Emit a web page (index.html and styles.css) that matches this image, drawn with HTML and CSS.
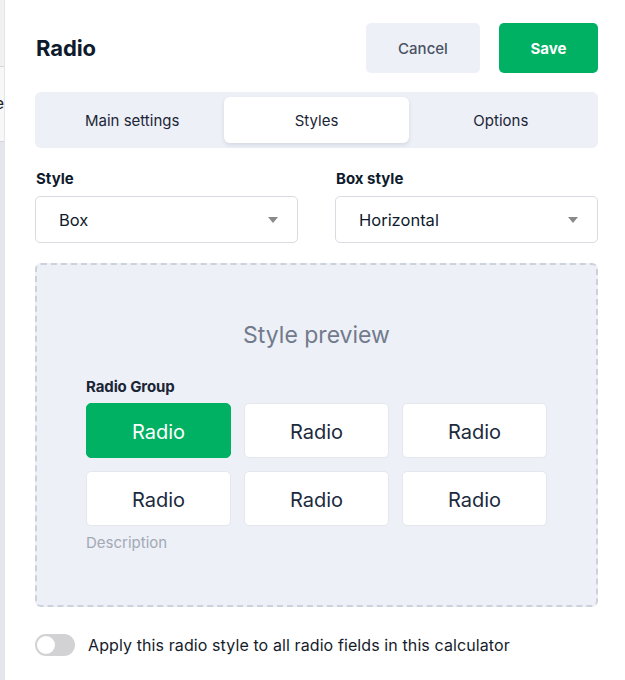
FILE: index.html
```html
<!DOCTYPE html>
<html>
<head>
<meta charset="utf-8">
<link rel="stylesheet" href="styles.css">
</head>
<body>
<div class="page">
  <div class="edge">
    <div class="edge-top"></div>
    <div class="edge-mid"><span>e</span></div>
    <div class="edge-bot"></div>
  </div>
  <div class="panel">
    <div class="header">
      <h1 class="title">Radio</h1>
      <div class="actions">
        <button class="btn btn-cancel">Cancel</button>
        <button class="btn btn-save">Save</button>
      </div>
    </div>
    <div class="tabs">
      <div class="tab">Main settings</div>
      <div class="tab active">Styles</div>
      <div class="tab">Options</div>
    </div>
    <div class="fields">
      <div class="field">
        <div class="label">Style</div>
        <div class="select"><span>Box</span><span class="caret"></span></div>
      </div>
      <div class="field">
        <div class="label">Box style</div>
        <div class="select"><span>Horizontal</span><span class="caret"></span></div>
      </div>
    </div>
    <div class="preview">
      <div class="preview-title">Style preview</div>
      <div class="group-label">Radio Group</div>
      <div class="radios">
        <div class="radio selected">Radio</div>
        <div class="radio">Radio</div>
        <div class="radio">Radio</div>
        <div class="radio">Radio</div>
        <div class="radio">Radio</div>
        <div class="radio">Radio</div>
      </div>
      <div class="desc">Description</div>
    </div>
    <div class="apply">
      <span class="toggle"><span class="knob"></span></span>
      <span class="apply-text">Apply this radio style to all radio fields in this calculator</span>
    </div>
  </div>
</div>
</body>
</html>
```

FILE: styles.css
```css
* { box-sizing: border-box; }
html, body { margin: 0; padding: 0; background: #fff; }
body {
  font-family: Inter, "Noto Sans", "Liberation Sans", sans-serif;
  color: #1b2536;
  width: 625px;
  height: 680px;
  overflow: hidden;
}
.page { display: flex; height: 680px; }
.edge {
  width: 5px;
  flex: none;
  display: flex;
  flex-direction: column;
  border-right: 1px solid #e3e5ea;
  overflow: hidden;
}
.edge-top { height: 67px; background: #f1f1f2; border-bottom: 1px solid #d6d7da; }
.edge-mid {
  height: 75px;
  background: #f7f7f8;
  border-bottom: 1px solid #d6d7da;
  position: relative;
}
.edge-mid span {
  position: absolute;
  right: 0;
  top: 26px;
  font-size: 16px;
  color: #222;
  line-height: 20px;
}
.edge-bot { flex: 1; background: #e4e6ec; }

.panel { flex: 1; padding: 23px 27px 0 30px; }

.header { display: flex; align-items: center; justify-content: space-between; height: 50px; }
.title { margin: 0; font-size: 22px; font-weight: 700; color: #0f1b2d; letter-spacing: -0.1px; padding-left: 1px; }
.actions { display: flex; gap: 19px; }
.btn {
  height: 50px;
  border: none;
  border-radius: 5px;
  font-family: inherit;
  font-size: 15px;
  padding-top: 2px;
}
.btn-cancel { width: 114px; background: #edf0f7; color: #4a5263; font-weight: 500; }
.btn-save { width: 99px; background: #00b063; color: #fff; font-weight: 700; }

.tabs {
  margin-top: 19px;
  height: 56px;
  background: #edf0f7;
  border-radius: 6px;
  padding: 5px;
  display: grid;
  grid-template-columns: repeat(3, 1fr);
}
.tab {
  display: flex;
  align-items: center;
  justify-content: center;
  font-size: 15px;
  color: #1b2536;
  border-radius: 6px;
}
.tab.active { background: #fff; box-shadow: 0 2px 4px rgba(30, 40, 70, 0.12); }

.fields { margin-top: 21px; display: grid; grid-template-columns: 263px 263px; column-gap: 37px; }
.label { font-size: 15px; font-weight: 700; line-height: 20px; color: #0f1b2d; padding-left: 1px; }
.select {
  margin-top: 7px;
  height: 47px;
  border: 1px solid #d9dbe0;
  border-radius: 5px;
  display: flex;
  align-items: center;
  justify-content: space-between;
  padding: 0 19px 0 23px;
  font-size: 16.5px;
  color: #0f1b2d;
}
.caret {
  width: 0; height: 0;
  border-left: 5px solid transparent;
  border-right: 5px solid transparent;
  border-top: 6px solid #8a8a8d;
}

.preview {
  margin-top: 20px;
  height: 344px;
  background: #edf0f7;
  border: 2px dashed #cdd1db;
  border-radius: 6px;
  padding: 55px 49px 0 49px;
}
.preview-title { text-align: center; font-size: 23px; line-height: 30px; color: #717b8c; }
.group-label { margin-top: 28px; font-size: 15px; font-weight: 700; line-height: 18px; color: #1b2536; letter-spacing: -0.1px; }
.radios {
  margin-top: 7px;
  display: grid;
  grid-template-columns: repeat(3, 145px);
  column-gap: 13px;
  row-gap: 13px;
}
.radio {
  height: 55px;
  background: #fff;
  border: 1px solid #e4e7ec;
  border-radius: 5px;
  display: flex;
  align-items: center;
  justify-content: center;
  font-size: 20px;
  color: #1b2a3d;
  padding-top: 3px;
}
.radio.selected { background: #00b063; border-color: #00b063; color: #fff; }
.desc { margin-top: 8px; font-size: 15px; line-height: 18px; color: #a2a9b5; }

.apply { margin-top: 27px; display: flex; align-items: center; gap: 13px; }
.toggle {
  width: 40px; height: 22px;
  border-radius: 11px;
  background: #d2d2d4;
  position: relative;
  flex: none;
}
.knob {
  position: absolute;
  left: 2px; top: 2px;
  width: 18px; height: 18px;
  border-radius: 50%;
  background: #fff;
}
.apply-text { font-size: 16px; color: #141c2b; letter-spacing: 0.1px; }
```
